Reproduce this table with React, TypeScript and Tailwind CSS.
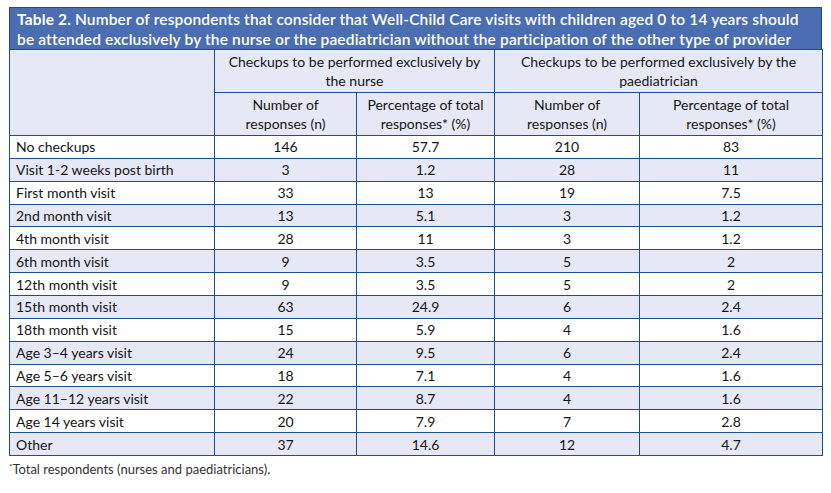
import React from "react";

const rows: [string, string, string, string, string][] = [
  ["No checkups", "146", "57.7", "210", "83"],
  ["Visit 1-2 weeks post birth", "3", "1.2", "28", "11"],
  ["First month visit", "33", "13", "19", "7.5"],
  ["2nd month visit", "13", "5.1", "3", "1.2"],
  ["4th month visit", "28", "11", "3", "1.2"],
  ["6th month visit", "9", "3.5", "5", "2"],
  ["12th month visit", "9", "3.5", "5", "2"],
  ["15th month visit", "63", "24.9", "6", "2.4"],
  ["18th month visit", "15", "5.9", "4", "1.6"],
  ["Age 3–4 years visit", "24", "9.5", "6", "2.4"],
  ["Age 5–6 years visit", "18", "7.1", "4", "1.6"],
  ["Age 11–12 years visit", "22", "8.7", "4", "1.6"],
  ["Age 14 years visit", "20", "7.9", "7", "2.8"],
  ["Other", "37", "14.6", "12", "4.7"],
];

const cell = "border-[1.5px] border-[#1d4e8c] p-0";

export default function App() {
  return (
    <div className="min-h-screen bg-white pl-[9px] pt-[7px] text-[#151515] [font-family:Lato,'Open_Sans',sans-serif]">
      <div className="w-[813px]">
        <div className="flex h-[42px] flex-col justify-center border-[1.5px] border-b-0 border-[#1d4e8c] bg-[#4b6db1] px-[7px] text-[15.5px] font-bold leading-[20px] tracking-[0.15px] text-white">
          <p>
            Table 2. <span className="font-semibold">Number of respondents that consider that Well-Child Care visits with children aged 0 to 14 years should</span>
          </p>
          <p className="font-semibold">
            be attended exclusively by the nurse or the paediatrician without the participation of the other type of provider
          </p>
        </div>
        <table className="w-full table-fixed border-collapse text-[14px] leading-[19px]">
          <colgroup>
            <col className="w-[205px]" />
            <col className="w-[142px]" />
            <col className="w-[138px]" />
            <col className="w-[145px]" />
            <col className="w-[183px]" />
          </colgroup>
          <thead className="bg-[#e6e8f5]">
            <tr className="h-[43px]">
              <th className={cell} rowSpan={2}></th>
              <th className={`${cell} px-2 text-center font-normal`} colSpan={2}>
                Checkups to be performed exclusively by the nurse
              </th>
              <th className={`${cell} px-2 text-center font-normal`} colSpan={2}>
                Checkups to be performed exclusively by the paediatrician
              </th>
            </tr>
            <tr className="h-[43px]">
              <th className={`${cell} text-center font-normal`}>
                Number of
                <br />
                responses (n)
              </th>
              <th className={`${cell} text-center font-normal`}>
                Percentage of total
                <br />
                responses* (%)
              </th>
              <th className={`${cell} text-center font-normal`}>
                Number of
                <br />
                responses (n)
              </th>
              <th className={`${cell} text-center font-normal`}>
                Percentage of total
                <br />
                responses* (%)
              </th>
            </tr>
          </thead>
          <tbody>
            {rows.map((r, i) => (
              <tr key={r[0]} className={`h-[22.86px] ${i % 2 === 0 ? "bg-white" : "bg-[#e6e8f5]"}`}>
                <td className={`${cell} pl-[6px] text-left`}>{r[0]}</td>
                <td className={`${cell} text-center`}>{r[1]}</td>
                <td className={`${cell} text-center`}>{r[2]}</td>
                <td className={`${cell} text-center`}>{r[3]}</td>
                <td className={`${cell} text-center`}>{r[4]}</td>
              </tr>
            ))}
          </tbody>
        </table>
        <p className="mt-[4px] text-[13px] text-[#333]">
          <sup className="text-[8px]">*</sup>Total respondents (nurses and paediatricians).
        </p>
      </div>
    </div>
  );
}
